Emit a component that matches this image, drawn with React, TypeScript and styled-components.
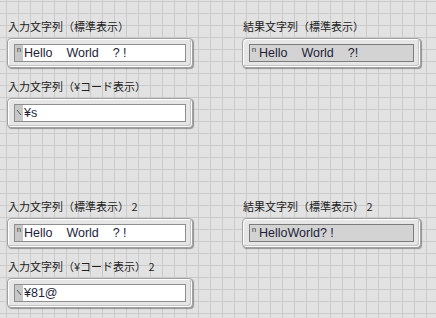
import React from "react"
import styled, { createGlobalStyle } from "styled-components"

// --- panel data ---
type Item = { label: string; value: string; kind: "control" | "indicator"; code?: boolean }

const topLeft: Item[] = [
  { label: "入力文字列（標準表示）", value: "Hello    World    ? !", kind: "control" },
  { label: "入力文字列（¥コード表示）", value: "¥s", kind: "control", code: true },
]
const topRight: Item[] = [
  { label: "結果文字列（標準表示）", value: "Hello    World    ?!", kind: "indicator" },
]
const bottomLeft: Item[] = [
  { label: "入力文字列（標準表示） 2", value: "Hello    World    ? !", kind: "control" },
  { label: "入力文字列（¥コード表示） 2", value: "¥81@", kind: "control", code: true },
]
const bottomRight: Item[] = [
  { label: "結果文字列（標準表示） 2", value: "HelloWorld? !", kind: "indicator" },
]

const GlobalStyle = createGlobalStyle`
  html, body {
    margin: 0;
    padding: 0;
  }
  body {
    min-height: 318px;
    background-color: #e2e2e2;
    background-image:
      linear-gradient(to right, #cbcbcb 1px, transparent 1px),
      linear-gradient(to bottom, #cbcbcb 1px, transparent 1px);
    background-size: 12px 12px;
    background-position: 6px 1px;
    font-family: "Noto Sans CJK JP", "Noto Sans", sans-serif;
  }
`

function Prefix({ code, indicator }: { code?: boolean; indicator: boolean }) {
  if (code) {
    return (
      <PrefixBox $indicator={indicator}>
        <svg width="8" height="18" viewBox="0 0 8 18">
          <line x1="2" y1="5" x2="6" y2="10" stroke="#555" strokeWidth="1" />
        </svg>
      </PrefixBox>
    )
  }
  return (
    <PrefixBox $indicator={indicator}>
      <PrefixGlyph>n</PrefixGlyph>
    </PrefixBox>
  )
}

function StringBox({ item }: { item: Item }) {
  const isInd = item.kind === "indicator"
  return (
    <Group>
      <Label>{item.label}</Label>
      <Frame>
        <Field $indicator={isInd}>
          <Prefix code={item.code} indicator={isInd} />
          <Value>{item.value}</Value>
        </Field>
      </Frame>
    </Group>
  )
}

export default function App() {
  return (
    <>
      <GlobalStyle />
      <Panel>
        <Section>
          <Column $width={186}>
            {topLeft.map(it => (
              <StringBox key={it.label} item={it} />
            ))}
          </Column>
          <Column $width={179}>
            {topRight.map(it => (
              <StringBox key={it.label} item={it} />
            ))}
          </Column>
        </Section>
        <Section $top={70}>
          <Column $width={186}>
            {bottomLeft.map(it => (
              <StringBox key={it.label} item={it} />
            ))}
          </Column>
          <Column $width={179}>
            {bottomRight.map(it => (
              <StringBox key={it.label} item={it} />
            ))}
          </Column>
        </Section>
      </Panel>
    </>
  )
}

// --- styled components ---
const Panel = styled.div`
  padding: 18px 0 0 7px;
`

const Section = styled.div<{ $top?: number }>`
  display: flex;
  column-gap: 49px;
  align-items: flex-start;
  margin-top: ${p => p.$top ?? 0}px;
`

const Column = styled.div<{ $width: number }>`
  width: ${p => p.$width}px;
  display: flex;
  flex-direction: column;
  gap: 10px;
`

const Group = styled.div`
  display: flex;
  flex-direction: column;
  gap: 4px;
`

const Label = styled.div`
  height: 16px;
  line-height: 16px;
  padding-left: 1px;
  font-size: 11px;
  color: #222;
  white-space: pre;
`

const Frame = styled.div`
  box-sizing: border-box;
  height: 30px;
  padding: 5px 6px;
  border: 1px solid #a0a0a0;
  border-radius: 4px;
  background: #e6e6e6;
  box-shadow:
    inset 1px 1px 0 #ffffff,
    inset -1px -1px 0 #ffffff,
    inset -2px -2px 0 #c4c4c4,
    1px 1px 1px rgba(0, 0, 0, 0.35);
`

const Field = styled.div<{ $indicator: boolean }>`
  box-sizing: border-box;
  height: 18px;
  display: flex;
  align-items: stretch;
  border: 1px solid ${p => (p.$indicator ? "#7c7c7c" : "#8e8e8e")};
  background: ${p => (p.$indicator ? "#d3d3d3" : "#ffffff")};
  overflow: hidden;
`

const PrefixBox = styled.div<{ $indicator: boolean }>`
  width: 8px;
  flex: none;
  background: ${p => (p.$indicator ? "#d3d3d3" : "#c8c8c8")};
  display: flex;
  justify-content: center;
`

const PrefixGlyph = styled.span`
  font-family: "Liberation Sans", sans-serif;
  font-size: 8px;
  line-height: 10px;
  color: #444;
`

const Value = styled.div`
  padding-left: 1px;
  font-family: "Liberation Sans", "Noto Sans CJK JP", sans-serif;
  font-size: 12.5px;
  line-height: 16px;
  color: #1e1e3a;
  white-space: pre;
`
